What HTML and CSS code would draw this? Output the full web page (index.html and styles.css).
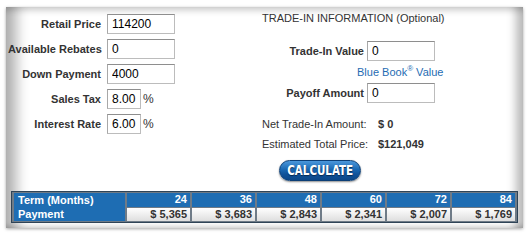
FILE: index.html
```html
<!DOCTYPE html>
<html>
<head>
<meta charset="utf-8">
<link rel="stylesheet" href="styles.css">
</head>
<body>
<div class="card">
  <div class="top">
    <div class="left">
      <label class="lbl">Retail Price</label><div class="field"><input class="inp" value="114200"></div>
      <label class="lbl">Available Rebates</label><div class="field"><input class="inp" value="0"></div>
      <label class="lbl">Down Payment</label><div class="field"><input class="inp" value="4000"></div>
      <label class="lbl">Sales Tax</label><div class="field"><input class="inp small" value="8.00"><span class="pct">%</span></div>
      <label class="lbl">Interest Rate</label><div class="field"><input class="inp small" value="6.00"><span class="pct">%</span></div>
    </div>
    <div class="right">
      <div class="title">TRADE-IN INFORMATION (Optional)</div>
      <div class="trade">
        <label class="lbl">Trade-In Value</label><input class="inp" value="0">
        <div class="bb"><a class="link">Blue Book<sup>®</sup> Value</a></div>
        <label class="lbl">Payoff Amount</label><input class="inp" value="0">
      </div>
      <div class="sum">
        <span class="sl">Net Trade-In Amount:</span><span class="sv">$ 0</span>
        <span class="sl">Estimated Total Price:</span><span class="sv">$121,049</span>
      </div>
      <button class="calc"><span class="calc-t">CALCULATE</span></button>
    </div>
  </div>
  <table class="terms">
    <tr class="hd">
      <th class="first" rowspan="2">Term (Months)<br>Payment</th>
      <td>24</td><td>36</td><td>48</td><td>60</td><td>72</td><td>84</td>
    </tr>
    <tr class="pay">
      <td>$ 5,365</td><td>$ 3,683</td><td>$ 2,843</td><td>$ 2,341</td><td>$ 2,007</td><td>$ 1,769</td>
    </tr>
  </table>
</div>
</body>
</html>
```
FILE: styles.css
```css
html, body {
  margin: 0;
  padding: 0;
  background: #fff;
}
body {
  width: 530px;
  height: 234px;
  overflow: hidden;
  font-family: "Liberation Sans", Arial, sans-serif;
  color: #333;
}
.card {
  margin: 7px 0 0 6px;
  width: 517px;
  height: 221px;
  box-sizing: border-box;
  background: #fff;
  box-shadow:
    inset 22px 0 14px -12px rgba(0,0,0,0.32),
    inset 0 9px 7px -6px rgba(0,0,0,0.22),
    inset -16px 0 10px -9px rgba(0,0,0,0.28),
    inset 0 -6px 5px -4px rgba(0,0,0,0.18),
    0 1px 3px rgba(0,0,0,0.35);
  display: flex;
  flex-direction: column;
}
.top {
  display: flex;
}
.left {
  width: 250px;
  padding: 7px 0 0 2px;
  display: grid;
  grid-template-columns: 93px auto;
  column-gap: 6px;
  row-gap: 5px;
  align-content: start;
}
.lbl {
  font-size: 11px;
  font-weight: bold;
  color: #333;
  text-align: right;
  align-self: center;
  white-space: nowrap;
}
.field {
  display: flex;
  align-items: center;
  gap: 2px;
}
.inp {
  box-sizing: border-box;
  width: 68px;
  height: 20px;
  margin: 0;
  padding: 0 4px;
  border: 1px solid #bcbcbc;
  border-top-color: #8e8e8e;
  border-left-color: #a8a8a8;
  font-family: "Liberation Sans", Arial, sans-serif;
  font-size: 12px;
  color: #000;
  background: #fff;
  outline: none;
}
.inp.small {
  width: 34px;
  padding: 0 2px 0 4px;
}
.pct {
  font-size: 12px;
  color: #333;
}
.right {
  padding: 4px 0 0 4px;
  display: flex;
  flex-direction: column;
}
.title {
  font-size: 11px;
  line-height: 14px;
  color: #333;
  white-space: nowrap;
}
.trade {
  margin-top: 16px;
  display: grid;
  grid-template-columns: 102px 68px;
  column-gap: 3px;
}
.bb {
  grid-column: 1 / -1;
  height: 22px;
  padding-left: 95px;
  display: flex;
  align-items: center;
}
.link {
  font-size: 11px;
  color: #1f6cb3;
  white-space: nowrap;
}
.link sup {
  font-size: 8px;
  line-height: 0;
}
.sum {
  margin-top: 11px;
  display: grid;
  grid-template-columns: 116px auto;
  grid-auto-rows: 20px;
  align-items: center;
  font-size: 11px;
}
.sl {
  color: #333;
  white-space: nowrap;
}
.sv {
  font-weight: bold;
  color: #333;
}
.calc {
  margin: 6px 0 0 17px;
  width: 82px;
  height: 21px;
  padding: 0;
  border: 1px solid #0c3f76;
  border-radius: 11px;
  background: linear-gradient(#4b98dc 0%, #1a68b2 45%, #0f5299 70%, #0c4788 100%);
  color: #fff;
  font-family: "Liberation Sans Narrow", "DejaVu Sans Condensed", "Liberation Sans", sans-serif;
  font-weight: bold;
  font-size: 14px;
  text-shadow: 0 1px 1px #072a52;
  box-shadow: 0 1px 2px rgba(0,0,0,0.45);
  line-height: 19px;
  display: flex;
  align-items: center;
  justify-content: center;
  overflow: hidden;
}
.calc-t {
  display: inline-block;
  transform: scaleX(0.82);
  white-space: nowrap;
}
.terms {
  margin: 10px 0 0 5px;
  width: 507px;
  border-collapse: separate;
  border-spacing: 2px 1px;
  background: #6f7b87;
  border: 1px solid #2f4457;
  font-size: 11px;
  font-weight: bold;
}
.terms td, .terms th {
  padding: 0 3px 0 0;
  height: 13px;
  line-height: 13px;
  text-align: right;
  white-space: nowrap;
}
.terms .first {
  width: 107px;
  background: #1e6db3;
  color: #fff;
  text-align: left;
  padding: 0 0 0 4px;
  vertical-align: middle;
  line-height: 14px;
}
.hd td {
  background: #1e6db3;
  color: #fff;
}
.pay td {
  background: linear-gradient(#ffffff, #dedede);
  color: #333;
}
```
